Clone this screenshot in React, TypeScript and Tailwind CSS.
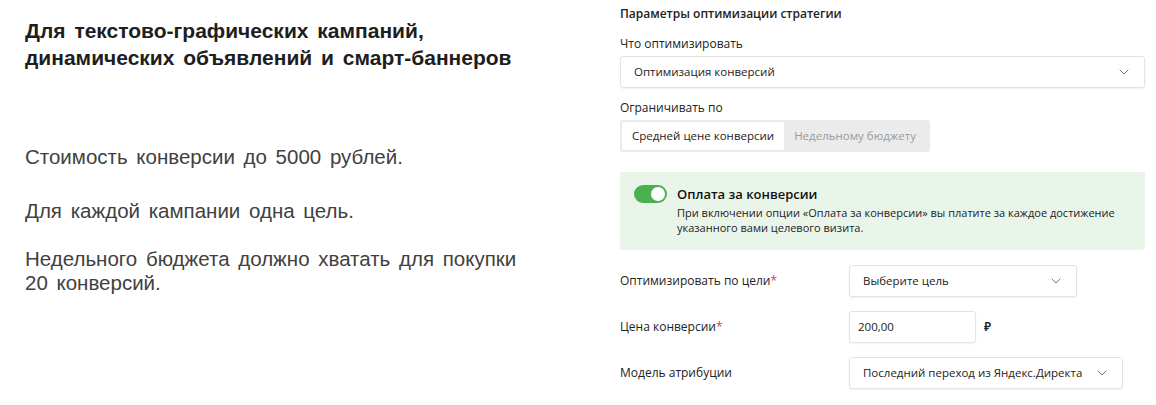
import React from "react";
import { ChevronDown } from "lucide-react";

const ui = { fontFamily: '"Open Sans", "Noto Sans", sans-serif' };
const arial = { fontFamily: '"Liberation Sans", Arial, sans-serif' };

const Select: React.FC<{ value: string; className?: string }> = ({ value, className }) => (
  <div
    className={`flex h-[32px] items-center justify-between rounded-[3px] border border-[#e3e3e3] bg-white pl-[13px] pr-[12px] shadow-[0_1px_2px_rgba(0,0,0,0.06)] ${className ?? ""}`}
  >
    <span className="text-[11.5px] text-[#222]">{value}</span>
    <ChevronDown className="h-4 w-4 text-[#777]" strokeWidth={1.5} />
  </div>
);

const Row: React.FC<{ label: string; required?: boolean; children: React.ReactNode }> = ({ label, required, children }) => (
  <div className="flex items-center">
    <div className="w-[229px] text-[12px] text-[#222]">
      {label}
      {required && <span className="text-[#e5344b]">*</span>}
    </div>
    {children}
  </div>
);

export default function App() {
  return (
    <div className="flex h-[405px] w-[1156px] bg-white">
      <div className="w-[620px] shrink-0 pl-[25px]" style={arial}>
        <h1 className="mt-[17px] text-[21px] font-bold leading-[27px] text-[#1e1e1e] [word-spacing:3px]">
          Для текстово-графических кампаний,
          <br />
          динамических объявлений и смарт-баннеров
        </h1>
        <div className="mt-[74px] text-[20.5px] leading-[24px] text-[#414141] [word-spacing:3px]">
          <p>Стоимость  конверсии  до 5000 рублей.</p>
          <p className="mt-[30px]">Для каждой кампании одна цель.</p>
          <p className="mt-[24px]">
            Недельного бюджета должно хватать для покупки
            <br />
            20 конверсий.
          </p>
        </div>
      </div>

      <div className="w-[525px] shrink-0" style={ui}>
        <div className="mt-[6px] text-[12px] font-semibold leading-[16px] text-[#222]">Параметры оптимизации стратегии</div>
        <div className="mt-[14px] text-[12px] leading-[16px] text-[#222]">Что оптимизировать</div>
        <Select value="Оптимизация конверсий" className="mt-[4px]" />
        <div className="mt-[12px] text-[12px] leading-[16px] text-[#222]">Ограничивать по</div>
        <div className="mt-[4px] flex h-[32px] w-[310px] rounded-[3px] bg-[#ebebeb] p-[2px]">
          <div className="flex items-center rounded-[2px] bg-white px-[10px] text-[11.5px] text-[#222]">Средней цене конверсии</div>
          <div className="flex items-center px-[10px] text-[11.5px] text-[#9a9a9a]">Недельному бюджету</div>
        </div>

        <div className="mt-[20px] flex h-[78px] gap-[10px] rounded-[2px] bg-[#eaf5ea] pl-[14px] pt-[13px]">
          <div className="relative h-[18px] w-[33px] shrink-0 rounded-full bg-[#4caf50]">
            <div className="absolute right-[2px] top-[2px] h-[14px] w-[14px] rounded-full bg-white" />
          </div>
          <div>
            <div className="text-[13px] font-semibold leading-[18px] text-[#111]">Оплата за конверсии</div>
            <div className="mt-[2px] text-[11px] leading-[15px] text-[#222]">
              При включении опции «Оплата за конверсии» вы платите за каждое достижение
              <br />
              указанного вами целевого визита.
            </div>
          </div>
        </div>

        <div className="mt-[15px] space-y-[14px]">
          <Row label="Оптимизировать по цели" required>
            <Select value="Выберите цель" className="w-[228px]" />
          </Row>
          <Row label="Цена конверсии" required>
            <div className="flex h-[32px] w-[127px] items-center rounded-[3px] border border-[#e3e3e3] bg-white pl-[8px] text-[11.5px] text-[#222] shadow-[0_1px_2px_rgba(0,0,0,0.06)]">
              200,00
            </div>
            <span className="ml-[8px] text-[12px] font-semibold text-[#222]">₽</span>
          </Row>
          <Row label="Модель атрибуции">
            <Select value="Последний переход из Яндекс.Директа" className="w-[274px]" />
          </Row>
        </div>
      </div>
    </div>
  );
}
